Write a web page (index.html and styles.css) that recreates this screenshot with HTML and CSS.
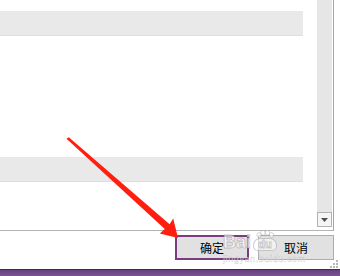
FILE: index.html
```html
<!DOCTYPE html>
<html lang="zh">
<head>
<meta charset="utf-8">
<link rel="stylesheet" href="styles.css">
</head>
<body>
<div class="window">
  <div class="listbox">
    <div class="list">
      <div class="row-pad"></div>
      <div class="band"></div>
      <div class="row-white"></div>
      <div class="band"></div>
    </div>
    <div class="scrollbar">
      <div class="track"></div>
      <div class="down-btn">
        <svg width="7" height="4" viewBox="0 0 7 4"><polygon points="0,0 7,0 3.5,4" fill="#505050"/></svg>
      </div>
    </div>
  </div>
  <div class="buttons">
    <button class="btn btn-ok">确定</button>
    <button class="btn btn-cancel">取消</button>
    <svg class="grip" width="8" height="8" viewBox="0 0 8 8">
      <rect x="6" y="0" width="2" height="2" fill="#b8b8b8"/>
      <rect x="3" y="3" width="2" height="2" fill="#b8b8b8"/>
      <rect x="6" y="3" width="2" height="2" fill="#b8b8b8"/>
      <rect x="0" y="6" width="2" height="2" fill="#b8b8b8"/>
      <rect x="3" y="6" width="2" height="2" fill="#b8b8b8"/>
      <rect x="6" y="6" width="2" height="2" fill="#b8b8b8"/>
    </svg>
  </div>
  <div class="taskbar"></div>

  <div class="watermark">
    <div class="wm-logo">
      <span class="wm-bai">Bai</span>
      <span class="wm-paw">
        <svg class="wm-toes" width="20" height="8" viewBox="0 0 20 8">
          <ellipse cx="4" cy="5" rx="2.2" ry="2.5" fill="rgba(255,255,255,0.6)" stroke="rgba(140,140,140,0.45)" stroke-width="0.8"/>
          <ellipse cx="8" cy="2.8" rx="2.2" ry="2.5" fill="rgba(255,255,255,0.6)" stroke="rgba(140,140,140,0.45)" stroke-width="0.8"/>
          <ellipse cx="12.5" cy="2.8" rx="2.2" ry="2.5" fill="rgba(255,255,255,0.6)" stroke="rgba(140,140,140,0.45)" stroke-width="0.8"/>
          <ellipse cx="16.5" cy="5" rx="2.2" ry="2.5" fill="rgba(255,255,255,0.6)" stroke="rgba(140,140,140,0.45)" stroke-width="0.8"/>
        </svg>
        <span class="wm-du">du</span>
      </span>
    </div>
    <div class="wm-url">jingyan.baidu.com</div>
  </div>

  <svg class="arrow" width="340" height="276" viewBox="0 0 340 276">
    <polygon points="66.5,138.8 68.8,137.3 169.6,224.2 173.2,218.4 178,238 159.8,233.6 164.8,228.9" fill="#ff1f0f"/>
  </svg>
</div>
</body>
</html>
```
FILE: styles.css
```css
html, body {
  margin: 0;
  padding: 0;
  background: #ffffff;
}
.window {
  position: relative;
  width: 340px;
  height: 276px;
  overflow: hidden;
  display: flex;
  flex-direction: column;
  font-family: "Noto Sans CJK SC", "Noto Sans", sans-serif;
}
.listbox {
  width: 333px;
  height: 230px;
  border-right: 1px solid #a4a4a4;
  border-bottom: 1px solid #b4b4b4;
  display: flex;
  background: #ffffff;
}
.list {
  width: 303px;
  display: flex;
  flex-direction: column;
}
.row-pad {
  height: 11px;
}
.band {
  height: 25px;
  background: #e9e9e9;
  border-bottom: 1px solid #dedede;
  box-sizing: border-box;
}
.row-white {
  height: 121px;
}
.scrollbar {
  margin-left: 14px;
  width: 15px;
  height: 227px;
  display: flex;
  flex-direction: column;
}
.track {
  flex: 1;
  background: #e6e6e6;
}
.down-btn {
  height: 15px;
  box-sizing: border-box;
  border: 1px solid #b2b2b2;
  background: #f5f5f5;
  display: flex;
  align-items: center;
  justify-content: center;
}
.down-btn svg {
  display: block;
}
.buttons {
  position: relative;
  height: 38px;
  display: flex;
  align-items: flex-start;
  padding: 4px 0 0 175px;
  box-sizing: border-box;
  gap: 9px;
}
.btn {
  margin: 0;
  padding: 0;
  height: 25px;
  box-sizing: border-box;
  background: #e1e1e1;
  font-family: "Noto Sans CJK SC", "Noto Sans", sans-serif;
  font-size: 12px;
  color: #000000;
  line-height: 1;
}
.btn-ok {
  width: 74px;
  border: 2px solid #7a3c80;
}
.btn-cancel {
  width: 76px;
  border: 1px solid #adadad;
}
.grip {
  position: absolute;
  right: 2px;
  bottom: 1px;
}
.taskbar {
  height: 7px;
  background: linear-gradient(#3e2c50 0, #3e2c50 1px, #684080 1px, #7a5394 100%);
}
.watermark {
  position: absolute;
  left: 223px;
  top: 231px;
  width: 90px;
  height: 34px;
  pointer-events: none;
}
.wm-logo {
  display: flex;
  align-items: flex-end;
  height: 20px;
  font-family: "Liberation Sans", Arial, sans-serif;
  font-weight: bold;
  color: rgba(255, 255, 255, 0.7);
  -webkit-text-stroke: 0.8px rgba(140, 140, 140, 0.5);
}
.wm-bai {
  font-size: 18px;
  line-height: 18px;
}
.wm-paw {
  margin-left: 2px;
  display: flex;
  flex-direction: column;
  align-items: center;
}
.wm-toes {
  display: block;
}
.wm-du {
  width: 22px;
  text-align: center;
  font-size: 11px;
  line-height: 11px;
  border-radius: 7px 7px 5px 5px;
  background: rgba(255, 255, 255, 0.55);
  border: 1px solid rgba(140, 140, 140, 0.45);
}
.wm-url {
  margin-top: 4px;
  font-family: "Liberation Sans", Arial, sans-serif;
  font-size: 9px;
  line-height: 9px;
  letter-spacing: 0.6px;
  color: rgba(255, 255, 255, 0.7);
  -webkit-text-stroke: 0.4px rgba(140, 140, 140, 0.4);
}
.arrow {
  position: absolute;
  left: 0;
  top: 0;
  pointer-events: none;
}
```
